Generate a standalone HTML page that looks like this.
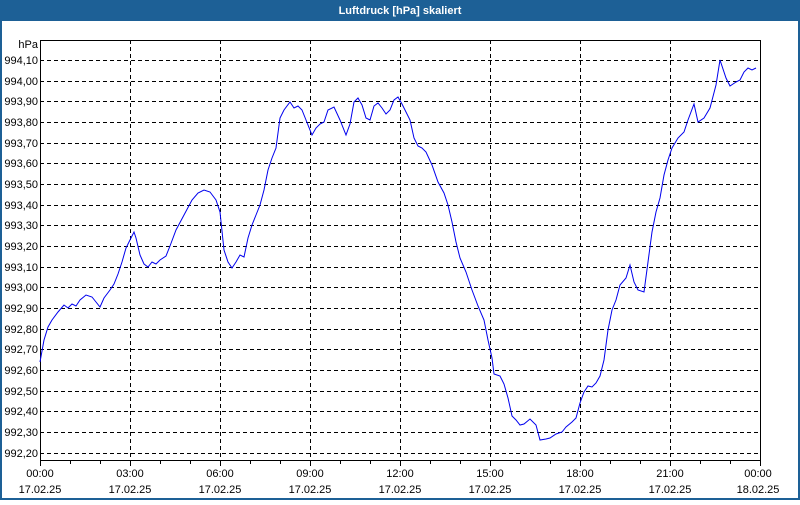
<!DOCTYPE html>
<html><head><meta charset="utf-8"><style>
body{margin:0;width:800px;height:500px;overflow:hidden;background:#fff;font-family:"Liberation Sans",sans-serif}
</style></head><body>
<svg width="800" height="500" xmlns="http://www.w3.org/2000/svg" font-family="Liberation Sans, sans-serif" font-size="11">
<rect x="0" y="0" width="800" height="500" fill="#1d6096"/>
<rect x="2" y="21" width="796" height="477" fill="#fff"/>
<text x="400" y="14" fill="#fff" font-weight="bold" text-anchor="middle">Luftdruck [hPa] skaliert</text>
<g stroke="#000" stroke-dasharray="4,3" stroke-width="1">
<path d="M40 60.5H760M40 81.5H760M40 101.5H760M40 122.5H760M40 143.5H760M40 163.5H760M40 184.5H760M40 205.5H760M40 225.5H760M40 246.5H760M40 267.5H760M40 287.5H760M40 308.5H760M40 329.5H760M40 349.5H760M40 370.5H760M40 391.5H760M40 411.5H760M40 432.5H760M40 453.5H760"/>
<path d="M130.5 40V460M220.5 40V460M310.5 40V460M400.5 40V460M490.5 40V460M580.5 40V460M670.5 40V460"/>
</g>
<rect x="40.5" y="40.5" width="720" height="420" fill="none" stroke="#000"/>
<g stroke="#000"><path d="M40.5 460V466M70.5 460V464M100.5 460V464M130.5 460V466M160.5 460V464M190.5 460V464M220.5 460V466M250.5 460V464M280.5 460V464M310.5 460V466M340.5 460V464M370.5 460V464M400.5 460V466M430.5 460V464M460.5 460V464M490.5 460V466M520.5 460V464M550.5 460V464M580.5 460V466M610.5 460V464M640.5 460V464M670.5 460V466M700.5 460V464M730.5 460V464M760.5 460V466"/></g>
<g text-anchor="end" fill="#000">
<text x="38" y="48">hPa</text>
<text x="38" y="64">994,10</text><text x="38" y="85">994,00</text><text x="38" y="105">993,90</text><text x="38" y="126">993,80</text><text x="38" y="147">993,70</text><text x="38" y="167">993,60</text><text x="38" y="188">993,50</text><text x="38" y="209">993,40</text><text x="38" y="229">993,30</text><text x="38" y="250">993,20</text><text x="38" y="271">993,10</text><text x="38" y="291">993,00</text><text x="38" y="312">992,90</text><text x="38" y="333">992,80</text><text x="38" y="353">992,70</text><text x="38" y="374">992,60</text><text x="38" y="395">992,50</text><text x="38" y="415">992,40</text><text x="38" y="436">992,30</text><text x="38" y="457">992,20</text>
</g>
<g text-anchor="middle" fill="#000">
<text x="40" y="477">00:00</text><text x="40" y="493">17.02.25</text>
<text x="130" y="477">03:00</text><text x="130" y="493">17.02.25</text>
<text x="220" y="477">06:00</text><text x="220" y="493">17.02.25</text>
<text x="310" y="477">09:00</text><text x="310" y="493">17.02.25</text>
<text x="400" y="477">12:00</text><text x="400" y="493">17.02.25</text>
<text x="490" y="477">15:00</text><text x="490" y="493">17.02.25</text>
<text x="580" y="477">18:00</text><text x="580" y="493">17.02.25</text>
<text x="670" y="477">21:00</text><text x="670" y="493">17.02.25</text>
<text x="758" y="477">00:00</text><text x="758" y="493">18.02.25</text>
</g>
<polyline fill="none" stroke="#0000ee" stroke-width="1" points="40,362 44,340 48,327 52,320 58,312 64,305 68,308 72,304 76,306 80,300 86,295 92,297 96,302 100,307 104,298 110,290 114,284 118,274 122,262 126,248 130,240 134,232 136,238 140,255 144,264 148,267 152,262 156,264 160,260 166,256 170,246 176,230 184,215 192,200 198,193 204,190 210,192 216,200 220,212 224,250 228,262 232,268 236,262 240,255 244,257 248,238 252,225 256,215 260,205 264,190 268,170 272,158 276,148 280,118 284,110 290,102 294,108 298,106 302,110 306,120 312,135 316,128 320,124 324,122 328,110 334,107 340,120 346,135 350,124 354,102 358,98 362,105 366,118 370,120 374,106 378,103 382,108 386,114 390,110 394,100 398,97 402,104 406,112 410,120 414,138 418,146 422,148 426,152 432,165 438,182 444,193 448,205 452,222 456,242 460,258 466,272 472,290 478,306 484,320 488,340 492,358 494,374 500,376 504,384 508,398 512,416 516,420 520,425 524,424 530,419 536,425 540,440 546,439 550,438 556,434 562,432 566,427 572,422 576,418 580,403 584,392 588,386 592,387 596,383 600,376 604,360 608,330 612,310 616,300 620,285 626,278 630,265 634,282 638,290 644,292 648,262 652,232 656,212 660,198 664,175 668,160 672,148 678,138 684,132 688,120 694,104 698,122 704,118 710,108 716,85 720,60 726,78 730,86 736,82 740,80 744,72 748,68 752,70 756,68"/>
</svg>
</body></html>
